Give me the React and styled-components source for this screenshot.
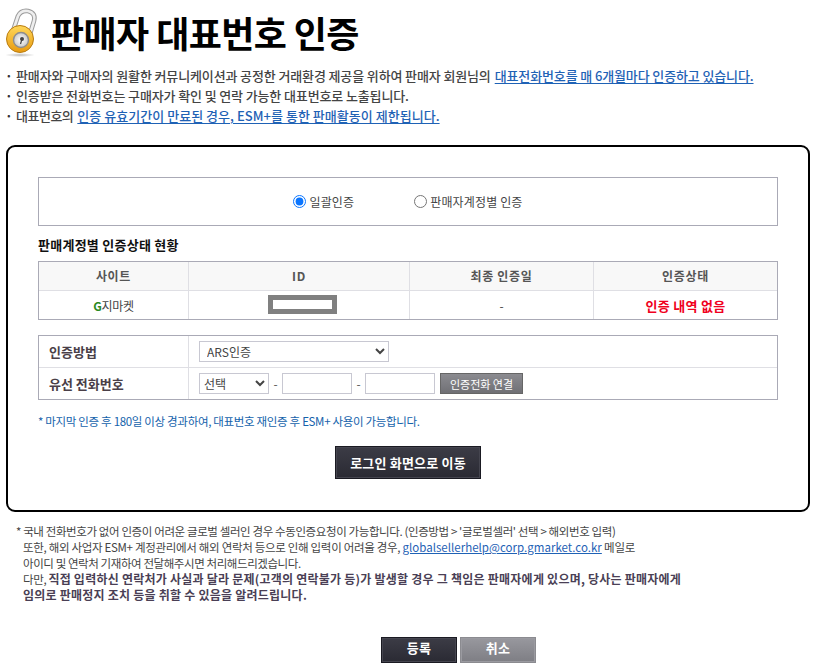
import React from "react";
import styled, { createGlobalStyle } from "styled-components";

const Global = createGlobalStyle`
  html, body { margin: 0; padding: 0; background: #fff; overflow: hidden; }
  body { font-family: "Noto Sans CJK KR", "Liberation Sans", sans-serif; font-size: 12px; color: #444; }
  * { box-sizing: border-box; }
`;
const Page = styled.div`width: 819px; height: 671px; padding: 6px 0 0 0; overflow: hidden;`;
const Header = styled.header`display: flex; align-items: center; gap: 10px; height: 52px; padding-left: 5px;`;
const Title = styled.h1`margin: 0; font-size: 36px; line-height: 52px; font-weight: 700; color: #000; letter-spacing: -0.6px; white-space: nowrap;`;
const Notes = styled.ul`list-style: none; margin: 8px 0 0; padding: 0 0 0 5px;`;
const Note = styled.li`display: flex; height: 20px; line-height: 20px; font-size: 13px; font-weight: 500; color: #444; letter-spacing: ${p => p.$ls ?? -0.13}px; white-space: nowrap;
  &::before { content: "·"; width: 11px; font-weight: 700; color: #333; }`;
const Em = styled.a`color: #1f62b5; font-weight: 500; text-decoration: underline; text-underline-offset: 2px; margin-left: 4px; letter-spacing: ${p => p.$ls ?? -0.13}px;`;
const Box = styled.section`margin: 19px 9px 0 6px; height: 367px; border: 2px solid #000; border-radius: 9px; padding: 30px 30px 0;`;
const RadioBar = styled.div`height: 49px; border: 1px solid #aaaab6; display: flex; justify-content: center; align-items: center; gap: 60px;`;
const RadioLabel = styled.label`display: flex; align-items: center; gap: 3px; font-size: 12px; color: #444; letter-spacing: 0.15px;`;
const Radio = styled.input`margin: 0; width: 13px; height: 13px; accent-color: #0a75ff;`;
const SubTitle = styled.h2`margin: 9px 0 0; height: 26px; line-height: 19px; font-size: 13px; font-weight: 700; color: #111; letter-spacing: 0.25px;`;
const Table = styled.table`width: 740px; table-layout: fixed; border-collapse: separate; border-spacing: 0; border: 1px solid #aaaab6;`;
const Th = styled.th`height: 29px; padding: 0 0 2px; background: #f8f8f8; border-right: 1px solid #dfdfe4; border-bottom: 1px solid #dfdfe4; font-size: 12px; font-weight: 700; color: #555; text-align: center; letter-spacing: 0.7px;
  &:last-child { border-right: 0; }`;
const Td = styled.td`height: 28px; padding: 0; border-right: 1px solid #dfdfe4; font-size: 12px; color: #444; text-align: center; letter-spacing: -0.3px;
  &:last-child { border-right: 0; }`;
const GLetter = styled.b`color: #2b8a1f;`;
const Masked = styled.span`display: block; width: 69px; height: 19px; margin: -1px auto 0 79px; border: 5px solid #808080; background: #fff;`;
const Failed = styled.strong`color: #f00020; font-size: 13px; font-weight: 700; letter-spacing: 0.3px;`;
const FormTable = styled(Table)`margin-top: 15px;`;
const FormHead = styled.th`height: 31px; padding: 0 0 0 10px; background: #fff; border-right: 1px solid #dfdfe4; font-size: 13px; font-weight: 700; color: #4a3f48; text-align: left;
  tr:first-child > & { border-bottom: 1px solid #dfdfe4; height: 32px; }`;
const FormCell = styled.td`padding: 0 0 0 10px;
  tr:first-child > & { border-bottom: 1px solid #dfdfe4; }`;
const Controls = styled.div`display: flex; align-items: center;`;
const Select = styled.select`width: ${p => p.$w}px; height: 21px; padding: 0 0 0 ${p => p.$pad}px; border: 1px solid #c8c8d2; border-radius: 0; background: #fff; font-family: inherit; font-size: 12px; color: #444;`;
const Dash = styled.span`width: 13px; text-align: center; color: #555;`;
const PhoneInput = styled.input`width: 70px; height: 21px; border: 1px solid #c8c8d2; padding: 0;`;
const Connect = styled.button`margin-left: 5px; width: 83px; height: 21px; padding: 0; border: 1px solid #666; background: linear-gradient(#8b8b90, #707075); color: #fff; font-family: inherit; font-size: 11px; letter-spacing: 0;`;
const Caution = styled.p`margin: 12px 0 0; height: 18px; line-height: 18px; font-size: 11.5px; color: #1462ab; letter-spacing: -0.32px; white-space: nowrap;`;
const Center = styled.div`display: flex; justify-content: center; margin-top: 16px;`;
const DarkButton = styled.button`width: ${p => p.$w}px; height: ${p => p.$h}px; padding: 0 0 ${p => p.$lift || 0}px; border: 1px solid ${p => p.$gray ? "#8b8b90" : "#1a1a22"}; box-shadow: inset 0 0 0 1px ${p => p.$gray ? "#9a9aa0" : "#45454f"}; background: ${p => p.$gray ? "linear-gradient(#98989e, #7e7e84)" : "linear-gradient(#3c3c46, #2a2a33)"}; color: #fff; font-family: inherit; font-size: 13px; font-weight: 700; letter-spacing: 0.2px;`;
const Foot = styled.div`margin: 11px 0 0 16px; font-size: 11.5px; line-height: 16px; color: #444; white-space: nowrap;`;
const FootLine = styled.div`padding-left: ${p => p.$first ? 0 : 7}px; letter-spacing: ${p => p.$ls ?? -0.39}px;`;
const Mail = styled.a`color: #1f62b5; text-decoration: underline; letter-spacing: 0.02px;`;
const Strong = styled.strong`color: #4a3f55; font-size: 12px; font-weight: 700; letter-spacing: 0.23px;`;
const Actions = styled.div`display: flex; gap: 3px; margin-top: 34px; padding-left: 381px;`;

const Lock = () => (
  <svg width="36" height="50" viewBox="0 0 36 50" aria-hidden="true">
    <defs>
      <linearGradient id="gold" x1="0" y1="0" x2="0" y2="1"><stop offset="0" stopColor="#ffd85a"/><stop offset="1" stopColor="#e89a10"/></linearGradient>
      <radialGradient id="face"><stop offset="0" stopColor="#fff"/><stop offset="1" stopColor="#c9c9c9"/></radialGradient>
      <radialGradient id="shade"><stop offset="0" stopColor="#bbb"/><stop offset="1" stopColor="#fff"/></radialGradient>
    </defs>
    <ellipse cx="15" cy="48" rx="15" ry="2" fill="url(#shade)"/>
    <path d="M8 24 L13 9 Q16 3 23 4 Q31 6 29 14 L25 27" fill="none" stroke="#9b9b9b" strokeWidth="4.6"/>
    <path d="M8 24 L13 9 Q16 3 23 4 Q31 6 29 14 L25 27" fill="none" stroke="#eeeeee" strokeWidth="2.6"/>
    <circle cx="15" cy="32" r="13.5" fill="url(#gold)" stroke="#b97c10" strokeWidth="1"/>
    <circle cx="16" cy="33" r="7.5" fill="url(#face)" stroke="#8d8d8d" strokeWidth="1.4"/>
    <circle cx="17" cy="32" r="2" fill="#444"/>
    <path d="M17 32 L15.5 37" stroke="#444" strokeWidth="1.2"/>
  </svg>
);

export default function App() {
  return (
    <Page>
      <Global />
      <Header><Lock /><Title>판매자 대표번호 인증</Title></Header>
      <Notes>
        <Note>판매자와 구매자의 원활한 커뮤니케이션과 공정한 거래환경 제공을 위하여 판매자 회원님의<Em href="#">대표전화번호를 매 6개월마다 인증하고 있습니다.</Em></Note>
        <Note>인증받은 전화번호는 구매자가 확인 및 연락 가능한 대표번호로 노출됩니다.</Note>
        <Note $ls={-0.5}>대표번호의<Em href="#" $ls={0.03}>인증 유효기간이 만료된 경우, ESM+를 통한 판매활동이 제한됩니다.</Em></Note>
      </Notes>
      <Box>
        <RadioBar>
          <RadioLabel><Radio type="radio" name="m" defaultChecked />일괄인증</RadioLabel>
          <RadioLabel><Radio type="radio" name="m" />판매자계정별 인증</RadioLabel>
        </RadioBar>
        <SubTitle>판매계정별 인증상태 현황</SubTitle>
        <Table>
          <colgroup><col width="150"/><col width="221"/><col width="184"/><col width="183"/></colgroup>
          <thead><tr><Th>사이트</Th><Th>ID</Th><Th>최종 인증일</Th><Th>인증상태</Th></tr></thead>
          <tbody><tr>
            <Td><GLetter>G</GLetter>지마켓</Td>
            <Td><Masked /></Td>
            <Td>-</Td>
            <Td><Failed>인증 내역 없음</Failed></Td>
          </tr></tbody>
        </Table>
        <FormTable>
          <colgroup><col width="150"/><col width="588"/></colgroup>
          <tbody>
            <tr><FormHead>인증방법</FormHead><FormCell><Controls><Select $w={190} $pad={3} defaultValue="ars"><option value="ars">ARS인증</option></Select></Controls></FormCell></tr>
            <tr><FormHead>유선 전화번호</FormHead><FormCell><Controls>
              <Select $w={70} $pad={0} defaultValue="s"><option value="s">선택</option></Select><Dash>-</Dash><PhoneInput /><Dash>-</Dash><PhoneInput /><Connect>인증전화 연결</Connect>
            </Controls></FormCell></tr>
          </tbody>
        </FormTable>
        <Caution>* 마지막 인증 후 180일 이상 경과하여, 대표번호 재인증 후 ESM+ 사용이 가능합니다.</Caution>
        <Center><DarkButton $w={146} $h={33}>로그인 화면으로 이동</DarkButton></Center>
      </Box>
      <Foot>
        <FootLine $first>* 국내 전화번호가 없어 인증이 어려운 글로벌 셀러인 경우 수동인증요청이 가능합니다. (인증방법 &gt; '글로벌셀러' 선택 &gt; 해외번호 입력)</FootLine>
        <FootLine $ls={-0.31}>또한, 해외 사업자 ESM+ 계정관리에서 해외 연락처 등으로 인해 입력이 어려울 경우, <Mail href="#">globalsellerhelp@corp.gmarket.co.kr</Mail> 메일로</FootLine>
        <FootLine $ls={-0.42}>아이디 및 연락처 기재하여 전달해주시면 처리해드리겠습니다.</FootLine>
        <FootLine>다만, <Strong>직접 입력하신 연락처가 사실과 달라 문제(고객의 연락불가 등)가 발생할 경우 그 책임은 판매자에게 있으며, 당사는 판매자에게</Strong></FootLine>
        <FootLine><Strong>임의로 판매정지 조치 등을 취할 수 있음을 알려드립니다.</Strong></FootLine>
      </Foot>
      <Actions>
        <DarkButton $w={76} $h={26} $lift={6}>등록</DarkButton>
        <DarkButton $gray $w={76} $h={26} $lift={6}>취소</DarkButton>
      </Actions>
    </Page>
  );
}
